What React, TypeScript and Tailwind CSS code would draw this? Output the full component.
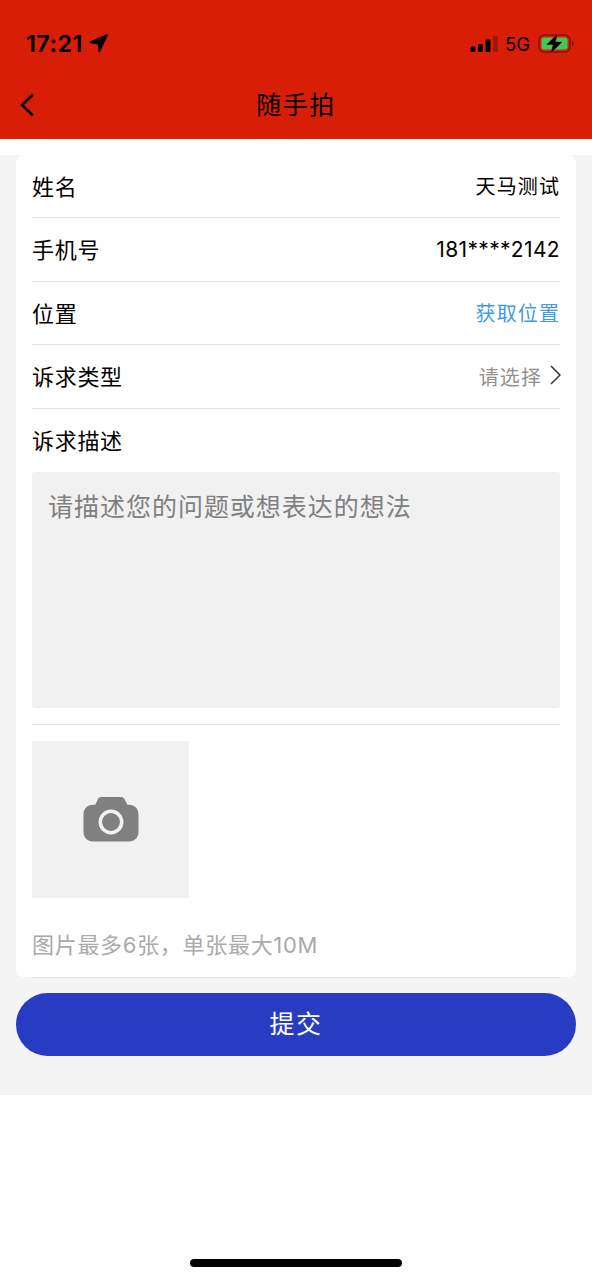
import type { ReactNode } from 'react';

interface FieldProps {
  label: string;
  children: ReactNode;
}

function Field({ label, children }: FieldProps) {
  return (
    <div className="flex h-[63.5px] items-center justify-between border-b border-[#e2e2e2] pt-[3px]">
      <span className="text-[22px] tracking-[0.7px]">{label}</span>
      <div className="flex items-center text-[20px] tracking-[1.1px]">{children}</div>
    </div>
  );
}

function StatusBar() {
  return (
    <div className="flex h-[70px] items-center justify-between pt-[18px] pr-[17px] pl-[26px]">
      <div className="flex items-center gap-[6px]">
        <span className="font-['Inter','Liberation_Sans',sans-serif] text-[23.5px] leading-none font-semibold tracking-[0.4px]">
          17:21
        </span>
        <svg className="mb-0.5" width="20" height="20" viewBox="0 0 20 20">
          <path
            d="M18 2 1.500 9.300l8 1.200.8 7.800Z"
            stroke="#000"
            strokeWidth="1.800"
            strokeLinejoin="round"
          />
        </svg>
      </div>
      <div className="flex items-center">
        <svg width="28" height="18" viewBox="0 0 28 18">
          <rect x="0.500" y="11.500" width="5" height="5.500" rx="1.200" />
          <rect x="8" y="9" width="5" height="8" rx="1.200" />
          <rect x="15.500" y="4.500" width="5" height="12.500" rx="1.200" />
          <rect x="23" y="0.500" width="5" height="16.500" rx="1.200" opacity="0.25" />
        </svg>
        <span className="ml-[7px] font-['Inter','Liberation_Sans',sans-serif] text-[18.5px] leading-none">5G</span>
        <svg className="ml-2" width="37" height="22" viewBox="0 0 37 22">
          <rect x="1" y="2" width="31" height="17" rx="5" fill="none" stroke="#000" strokeOpacity="0.4" strokeWidth="1.600" />
          <rect x="3.500" y="4.500" width="26" height="12" rx="2.500" fill="#3ccb56" />
          <path d="M34 8v5c1-.4 1.700-1.300 1.700-2.500S35 8.400 34 8Z" opacity="0.5" />
          <path
            d="M19.500 1 8.800 11.600h6.400l-2.200 8.400 10.900-10.900h-6.600l2.200-8.100Z"
            stroke="#d81e06"
            strokeWidth="0.800"
            paintOrder="stroke"
          />
        </svg>
      </div>
    </div>
  );
}

function CameraIcon() {
  return (
    <svg width="56" height="45" viewBox="0 0 56 45">
      <path
        d="M18 0h20c1.500 0 2.700.7 3.400 2l3 5.800H46c5.500 0 9.500 4 9.500 9.500V35c0 5.500-4 9.500-9.500 9.500H10C4.500 44.500.5 40.500.5 35V17.300c0-5.500 4-9.500 9.500-9.500h2.200L15 2c.6-1.300 1.600-2 3-2Z"
        fill="#808080"
      />
      <circle cx="28" cy="25" r="10.700" fill="none" stroke="#f1f1f1" strokeWidth="3.500" />
    </svg>
  );
}

export default function App() {
  return (
    <div className="flex h-[1280px] w-[592px] flex-col bg-white font-['Inter','Noto_Sans_CJK_SC',sans-serif] text-black">
      <header className="h-[139px] shrink-0 bg-[#d81e06]">
        <StatusBar />
        <div className="grid h-[69px] grid-cols-[40px_1fr_40px] items-center">
          <svg className="ml-[19px]" width="16" height="24" viewBox="0 0 16 24">
            <path d="M14 1.500 3 12l11 10.500" fill="none" stroke="#000" strokeWidth="2.600" />
          </svg>
          <h1 className="pt-0.5 text-center text-[25px] tracking-[1.5px]">随手拍</h1>
        </div>
      </header>

      <main className="mt-[15.5px] h-[940.5px] shrink-0 bg-[#f4f4f4] px-4">
        <section className="h-[822.5px] rounded-lg bg-white px-4">
          <Field label="姓名">天马测试</Field>
          <Field label="手机号">
            <span className="mb-0.5 text-[21px] tracking-[0.35px]">181****2142</span>
          </Field>
          <Field label="位置">
            <button className="tracking-[1.1px] text-[#4099ea]">获取位置</button>
          </Field>
          <Field label="诉求类型">
            <span className="text-[#909090]">请选择</span>
            <svg className="-mr-px mb-1.5 ml-2" width="11" height="20" viewBox="0 0 11 20">
              <path d="m1 1 9 9-9 9" fill="none" stroke="#333" strokeWidth="1.500" />
            </svg>
          </Field>

          <div className="border-b border-[#e2e2e2] pb-4">
            <div className="flex h-[63.5px] items-center pt-0.5 text-[22px] tracking-[0.7px]">诉求描述</div>
            <textarea
              className="block h-[236px] w-full resize-none rounded-[3px] bg-[#f1f1f1] px-4 py-[17px] text-[25px] leading-9 tracking-[0.98px] outline-none placeholder:text-[#808080]"
              placeholder="请描述您的问题或想表达的想法"
            />
          </div>

          <div className="h-[252.5px] border-b border-[#e2e2e2] pt-[15.5px]">
            <button className="flex size-[157px] items-center justify-center bg-[#f1f1f1]">
              <CameraIcon />
            </button>
            <p className="mt-[31px] text-[22px] leading-8 tracking-[0.7px] text-[#aaaaaa]">
              图片最多6张，单张最大10M
            </p>
          </div>
        </section>

        <button className="mt-4 h-[63px] w-full rounded-full bg-[#273bc3] text-[25px] tracking-[1.5px] text-white">
          提交
        </button>
      </main>

      <div className="mt-auto mb-[13px] h-2 w-[212px] self-center rounded-full bg-black" />
    </div>
  );
}
